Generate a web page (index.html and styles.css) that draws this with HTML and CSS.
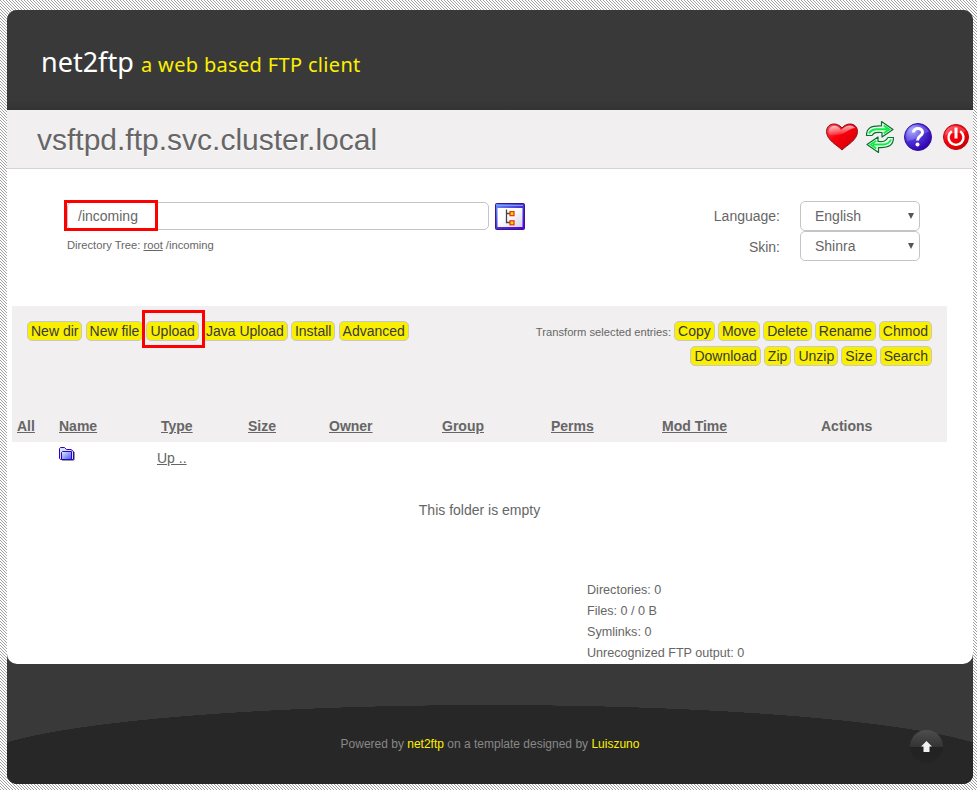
FILE: index.html
```html
<!DOCTYPE html>
<html lang="en">
<head>
<meta charset="utf-8">
<title>net2ftp</title>
<link rel="stylesheet" href="styles.css">
</head>
<body>
<div class="wrapper">
  <header class="header"><span class="logo">net2ftp</span><span class="tagline">a web based FTP client</span></header>
  <main class="main">
    <div class="titlebar">
      <h1>vsftpd.ftp.svc.cluster.local</h1>
      <div class="icons">
        <svg class="heart" width="34" height="30" viewBox="0 0 34 30">
          <defs>
            <linearGradient id="red" x1="0" y1="0" x2="1" y2="1"><stop offset="0" stop-color="#ff5560"/><stop offset=".4" stop-color="#f8000c"/><stop offset=".7" stop-color="#e40008"/><stop offset="1" stop-color="#a80000"/></linearGradient>
            <radialGradient id="blue" cx=".3" cy=".25" r=".8"><stop offset="0" stop-color="#9d9cff"/><stop offset=".45" stop-color="#5038e0"/><stop offset="1" stop-color="#3200a8"/></radialGradient>
            <linearGradient id="gloss" x1="0" y1="0" x2="0" y2="1"><stop offset="0" stop-color="#fff" stop-opacity=".7"/><stop offset="1" stop-color="#fff" stop-opacity=".1"/></linearGradient>
          </defs>
          <path d="M17 28C12 23 1.500 18 1.500 9.500C1.500 1 12 -.5 17 6C22-.5 32.500 1 32.500 9.500C32.500 18 22 23 17 28Z" fill="url(#red)" stroke="#87131b"/>
          <path d="M3.500 10C4 3 12 1.500 16 8C22 2 28 2.500 30 6C22 7 22 12 12 13C7 13.500 4 14 3.500 10Z" fill="url(#gloss)"/>
        </svg>
        <svg class="refresh" width="30" height="34" viewBox="0 0 30 34">
          <g fill="#e5ffe9" stroke="#0a7030" stroke-width="1.200" stroke-linejoin="round">
            <path d="M1.500 15.500C1.500 8 6 5.500 16.500 6V1.500L28 9.500L17 17V12.500C11 12 9 12.500 7 15.500Z"/>
            <path d="M28.500 17.500C28.500 25 24 28 13.500 27.500V32.500L2 24.500L13 17V21.500C19 22 21 21 23 17.500Z"/>
          </g>
          <g fill="none" stroke="#0eea42" stroke-width="1.900">
            <path d="M4 13.500Q6 9.300 12 9.200H22M18.700 5.500L24.300 9.500L18.700 13.300"/>
            <path d="M26 19.500Q24 24.300 18 24.500H8M11.300 20.700L5.700 24.500L11.300 28.500"/>
          </g>
        </svg>
        <svg class="help" width="30" height="30" viewBox="0 0 30 30">
          <circle cx="15" cy="15" r="13.500" fill="url(#blue)" stroke="#35149c"/>
          <path d="M3 14C4 6 10 3 15 3C21 3 25 7 26 10C20 10 13 19 4 19Z" fill="#fff" opacity=".18"/>
          <path d="M10.500 10.500C10.500 5 19.500 5 19.500 10.500C19.500 14 14.500 14 14.500 18.500" fill="none" stroke="#fff" stroke-width="3"/>
          <circle cx="14.500" cy="22.500" r="2" fill="#fff"/>
        </svg>
        <svg class="power" width="28" height="28" viewBox="0 0 28 28">
          <circle cx="14" cy="14" r="12.500" fill="url(#red)" stroke="#b40812"/>
          <path d="M9.800 8.200A7.500 7.500 0 1 0 18.200 8.200" fill="none" stroke="#fff" stroke-width="2.400"/>
          <path d="M14 4.500V15.500" stroke="#fff" stroke-width="3"/>
          <path d="M3 12C4 5 9 3 14 3S23 6 24 9Q14 9 3 12Z" fill="#fff" opacity=".2"/>
        </svg>
      </div>
    </div>

    <section class="location">
      <div class="path">
        <div class="pathrow">
          <div class="field">/incoming<span class="mark mark-path"></span></div>
          <svg class="tree" width="30" height="27" viewBox="0 0 30 27">
            <defs>
              <linearGradient id="frame" x1="0" y1="0" x2="1" y2="1"><stop offset="0" stop-color="#6d91ff"/><stop offset=".5" stop-color="#4934d4"/><stop offset="1" stop-color="#5000df"/></linearGradient>
              <linearGradient id="panel" x1="0" y1="0" x2="1" y2="1"><stop offset=".4" stop-color="#fff"/><stop offset="1" stop-color="#d3d2e6"/></linearGradient>
            </defs>
            <rect x=".5" y=".5" width="29" height="26" rx="1" fill="url(#frame)" stroke="#3b168f"/>
            <path d="M2 2.500H28" stroke="#779dff"/>
            <rect x="2.500" y="5" width="25" height="19" fill="url(#panel)"/>
            <path d="M11.500 6.500V19.500H15M11.500 10.500H15" fill="none" stroke="#444" stroke-width="1.300"/>
            <g fill="#ffd800" stroke="#e83a16" stroke-width="1.300"><rect x="15" y="8.600" width="4" height="4"/><rect x="15" y="17.800" width="4" height="4"/></g>
          </svg>
        </div>
        <p class="crumbs">Directory Tree: <a>root</a> /incoming</p>
      </div>
      <div class="options">
        <span class="label">Language:</span><div class="select">English<i></i></div>
        <span class="label">Skin:</span><div class="select">Shinra<i></i></div>
      </div>
    </section>

    <section class="panel">
      <div class="toolbar">
        <div class="left">
          <a class="btn">New dir</a>
          <a class="btn">New file</a>
          <a class="btn upload">Upload<span class="mark mark-upload"></span></a>
          <a class="btn">Java Upload</a>
          <a class="btn">Install</a>
          <a class="btn">Advanced</a>
        </div>
        <div class="right">
          Transform selected entries:
          <a class="btn">Copy</a>
          <a class="btn">Move</a>
          <a class="btn">Delete</a>
          <a class="btn">Rename</a>
          <a class="btn">Chmod</a><br>
          <a class="btn">Download</a>
          <a class="btn">Zip</a>
          <a class="btn">Unzip</a>
          <a class="btn">Size</a>
          <a class="btn">Search</a>
        </div>
      </div>
      <div class="heads">
        <a>All</a><a>Name</a><a>Type</a><a>Size</a><a>Owner</a><a>Group</a><a>Perms</a><a>Mod Time</a><b>Actions</b>
      </div>
    </section>
    <div class="uprow">
      <svg class="folder" width="17" height="15" viewBox="0 0 17 15">
        <defs><linearGradient id="fold" x1="0" y1="0" x2="1" y2="1"><stop offset="0" stop-color="#e4f0ff"/><stop offset="1" stop-color="#3b58f5"/></linearGradient></defs>
        <path d="M.5 11.500V1.500L1.500.5H5.500L7.500 2.500H12L14.500 4.500V12.500H1.500Z" fill="#d5e2ff" stroke="#3400b8"/>
        <path d="M2.500 12.500V5.500L3.500 4.500H12.500V12.500Z" fill="url(#fold)" stroke="#3400b8"/>
        <path d="M15.500 5V12.500L14.500 13.500H3" fill="none" stroke="#555" opacity=".6"/>
      </svg>
      <a>Up ..</a>
    </div>
    <p class="empty">This folder is empty</p>
    <div class="stats">Directories: 0<br>Files: 0 / 0 B<br>Symlinks: 0<br>Unrecognized FTP output: 0</div>
  </main>
  <footer class="footer">
    <p>Powered by <a>net2ftp</a> on a template designed by <a>Luiszuno</a></p>
    <div class="totop"><svg width="11" height="11" viewBox="0 0 11 11"><path d="M5.500 0L11 5.500H8.500V11H2.500V5.500H0Z" fill="#f3f0f2"/></svg></div>
  </footer>
</div>
</body>
</html>
```
FILE: styles.css
```css
* { box-sizing: border-box; }
body {
  margin: 0;
  padding: 10px 4px 6px 7px;
  height: 790px;
  overflow: hidden;
  font: 14px/21px "Liberation Sans", Arial, sans-serif;
  color: #666;
  --dot: conic-gradient(from 0deg at 1px 1px, transparent 270deg, #a0a0a0 0);
  background-color: #fff;
  background-image: var(--dot), var(--dot), var(--dot);
  background-size: 3px 3px;
  background-position: 0 0, 1px 1px, 2px 2px;
}
p, h1 { margin: 0; font-weight: normal; }
a { text-decoration: underline; }
.wrapper { width: 966px; height: 774px; border-radius: 10px; background: #393939; overflow: hidden; }

.header {
  height: 100px;
  padding: 33px 0 0 34px;
  line-height: 38px;
  font-family: "Noto Sans", "Open Sans", sans-serif;
  display: flex;
  align-items: baseline;
  white-space: nowrap;
  background: linear-gradient(#393939 90px, #333);
}
.logo { width: 100px; font-size: 27px; color: #fff; }
.tagline { font-size: 20px; letter-spacing: .33px; color: #fcf000; }

.main { position: relative; z-index: 1; height: 554px; background: #fff; border-radius: 0 0 10px 10px; }
.titlebar {
  height: 59px;
  padding-left: 30px;
  display: flex;
  justify-content: space-between;
  background: #f1eff0;
  border-bottom: 1px solid #d4d2d3;
}
h1 { font-size: 30px; line-height: 60px; text-shadow: 0 1px #fff; }
.icons { display: flex; padding: 11px 3px 0 0; align-items: flex-start; }
.heart { margin: 1px 6px 0 0; }
.refresh { margin: -1px 8px 0 0; }
.help { margin: 1px 9px 0 0; }
.power { margin: 2px 0 0; }

.location { height: 137px; display: flex; justify-content: space-between; padding: 32px 53px 0 60px; }
.pathrow { display: flex; gap: 6px; padding-top: 1px; }
.field { position: relative; width: 422px; height: 28px; border: 1px solid #c4c4c4; border-radius: 5px; padding-left: 10px; line-height: 27px; }
.tree { margin-top: 1px; }
.mark { position: absolute; border: 3px solid #f00; }
.mark-path { left: -4px; top: -3px; width: 94px; height: 31px; }
.mark-upload { left: -5px; top: -12px; width: 63px; height: 38px; z-index: 1; }
.crumbs { font-size: 11.200px; line-height: 16px; margin-top: 7px; }
.options { display: grid; grid-template-columns: auto 120px; column-gap: 20px; grid-auto-rows: 30px; text-align: right; line-height: 30px; align-content: start; }
.label + .select + .label { padding-top: 1px; }
.select { position: relative; height: 30px; border: 1px solid #c4c4c4; border-radius: 5px; text-align: left; padding-left: 14px; line-height: 28px; }
.select i { position: absolute; right: 5px; top: 11px; border: solid transparent; border-width: 6px 3px 0; border-top-color: #555; }

.panel { width: 935px; height: 136px; margin-left: 5px; background: #f1eff0; }
.toolbar { height: 107px; padding: 14px 15px 0; display: flex; justify-content: space-between; font-size: 11.200px; line-height: 25px; }
.right { text-align: right; }
.btn { position: relative; display: inline-block; height: 20px; font-size: 14px; line-height: 18px; padding: 0 3px; color: #393939; background: #f9ef00; border: 1px solid #c8c8c8; border-radius: 5px; text-decoration: none; }
.heads { display: grid; grid-template-columns: 42px 102px 87px 81px 113px 109px 111px 159px auto; padding: 3px 5px; font-weight: bold; }
.uprow { display: flex; padding: 5px 0 0 52px; height: 52px; }
.uprow a { margin-left: 81px; line-height: 23px; }
.empty { width: 945px; text-align: center; height: 86px; line-height: 32px; }
.stats { margin-left: 580px; font-size: 12.600px; line-height: 21px; }

.footer {
  position: relative;
  height: 130px;
  margin-top: -10px;
  padding-top: 80px;
  font-size: 12px;
  color: #888;
  background:
    radial-gradient(515px 57px at 483px 108px, #272727 99.8%, transparent 100%),
    linear-gradient(transparent 108px, #272727 108px),
    #393939;
}
.footer p { text-align: center; line-height: 20px; }
.footer a { color: #fcf000; text-decoration: none; }
.totop { position: absolute; left: 903px; top: 76px; width: 33px; height: 33px; padding-bottom: 1px; border-radius: 50%; background: linear-gradient(#4e4e4e, #343434 50%, #222 52%, #242424); display: flex; align-items: center; justify-content: center; }
```
